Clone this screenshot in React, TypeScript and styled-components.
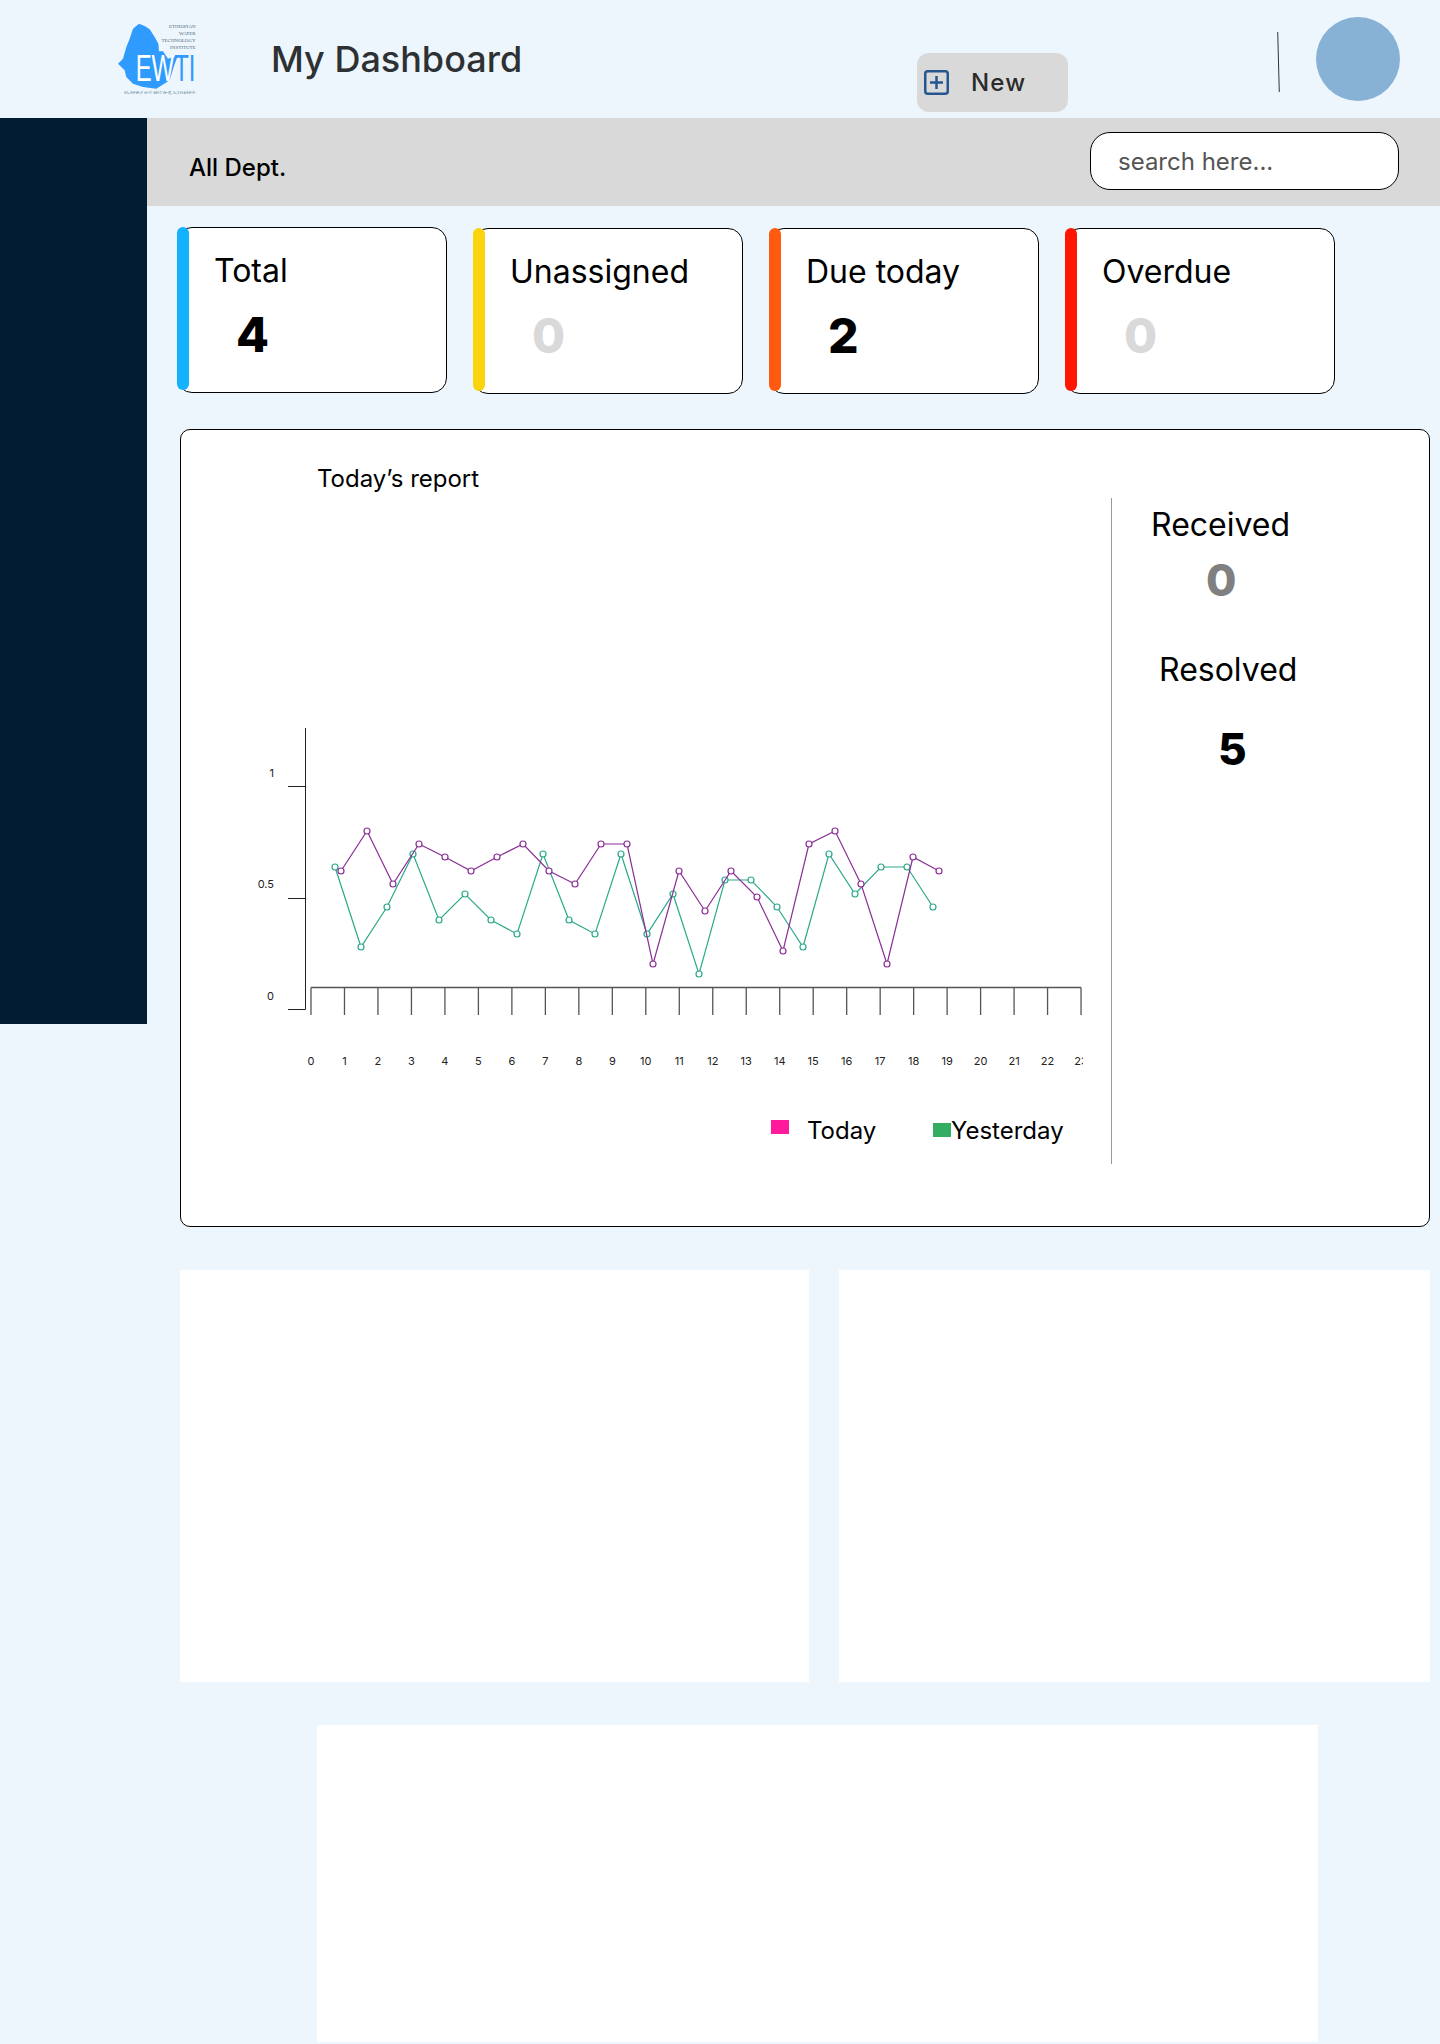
import styled, { createGlobalStyle } from 'styled-components';

const GlobalStyle = createGlobalStyle`
  * {
    box-sizing: border-box;
  }

  body {
    margin: 0;
    background: #edf5fd;
    font-family: Inter, "Noto Sans", sans-serif;
    color: #000;
  }
`;

const Page = styled.div`
  width: 1440px;
  min-height: 2044px;
  overflow: hidden;
`;

const Header = styled.header`
  height: 118px;
  display: flex;
  align-items: center;
  padding: 0 40px 0 118px;
`;

const Logo = styled.svg`
  width: 80px;
  height: 75px;
  flex: none;
`;

const PageTitle = styled.h1`
  margin: 0 0 0 73px;
  font-size: 36px;
  font-weight: 500;
  color: #2e3133;
`;

const NewButton = styled.button`
  width: 151px;
  height: 59px;
  margin: 47px 0 0 auto;
  padding: 0 0 0 7px;
  display: flex;
  align-items: center;
  gap: 22px;
  border: none;
  border-radius: 12px;
  background: #d9d9d9;
  color: #2b2b2b;
  font-family: inherit;
  font-size: 24px;
  font-weight: 500;
  letter-spacing: 1.2px;
`;

const HeaderRule = styled.div`
  width: 1px;
  height: 60px;
  margin: 6px 37px 0 210px;
  background: #333;
  transform: rotate(-1.5deg);
`;

const Avatar = styled.div`
  width: 84px;
  height: 84px;
  border-radius: 50%;
  background: #88b2d5;
`;

const Body = styled.div`
  display: flex;
  align-items: flex-start;
`;

const Sidebar = styled.aside`
  width: 147px;
  height: 906px;
  flex: none;
  background: #021d33;
`;

const Main = styled.main`
  flex: 1;
  min-width: 0;
  padding-bottom: 2px;
`;

const FilterBar = styled.div`
  height: 88px;
  display: flex;
  align-items: center;
  justify-content: space-between;
  padding: 0 41px 0 42px;
  background: #d9d9d9;
`;

const DeptLabel = styled.div`
  margin-top: 10px;
  font-size: 24px;
  font-weight: 500;
`;

const Search = styled.input`
  width: 309px;
  height: 58px;
  margin-bottom: 2px;
  padding: 0 27px;
  border: 1.5px solid #000;
  border-radius: 20px;
  background: #fff;
  font-family: inherit;
  font-size: 24px;
  outline: none;

  &::placeholder {
    color: #555;
    opacity: 1;
  }
`;

const CardRow = styled.section`
  display: flex;
  gap: 26px;
  align-items: flex-start;
  margin-top: 21px;
  padding-left: 30px;
`;

const Card = styled.div<{ $raised?: boolean }>`
  width: 270px;
  height: 166px;
  display: flex;
  margin-top: ${(p) => (p.$raised ? '0' : '1px')};
  border: 1px solid #000;
  border-radius: 15px;
  background: #fff;
`;

const Stripe = styled.div<{ $color: string }>`
  width: 12px;
  height: 163px;
  flex: none;
  margin: -1px 0 0 -1px;
  border-radius: 6px;
  background: ${(p) => p.$color};
`;

const CardBody = styled.div`
  padding: 23px 0 0 25px;
`;

const CardLabel = styled.div`
  font-size: 32px;
  line-height: 39px;
`;

const CardValue = styled.div<{ $muted?: boolean }>`
  margin: 16px 0 0 22px;
  font-size: 48px;
  line-height: 58px;
  font-weight: 800;
  color: ${(p) => (p.$muted ? '#d9d9d9' : '#000')};
`;

const ReportPanel = styled.section`
  width: 1250px;
  height: 798px;
  display: flex;
  margin: 35px 0 0 33px;
  border: 1px solid #000;
  border-radius: 10px;
  background: #fff;
`;

const ChartColumn = styled.div`
  width: 930px;
  flex: none;
`;

const ReportTitle = styled.h2`
  margin: 34px 0 0 136px;
  font-size: 24px;
  line-height: 29px;
  font-weight: 400;
`;

const Chart = styled.svg`
  display: block;
  width: 833px;
  height: 350px;
  margin: 227px 0 0 69px;
`;

const Legend = styled.div`
  display: flex;
  align-items: center;
  height: 30px;
  margin: 45px 0 0 590px;
`;

const LegendItem = styled.div<{ $gap: number; $width: number }>`
  width: ${(p) => p.$width}px;
  display: flex;
  align-items: center;
  gap: ${(p) => p.$gap}px;
  font-size: 24px;
`;

const Swatch = styled.span<{ $color: string; $lift?: boolean }>`
  width: 18px;
  height: 14px;
  flex: none;
  margin-bottom: ${(p) => (p.$lift ? '6px' : '0')};
  background: ${(p) => p.$color};
`;

const ReportRule = styled.div`
  width: 1px;
  height: 666px;
  flex: none;
  margin-top: 68px;
  background: #999;
`;

const Totals = styled.div`
  padding: 75px 0 0 39px;
`;

const TotalLabel = styled.div<{ $indent?: number }>`
  margin-left: ${(p) => p.$indent ?? 0}px;
  font-size: 32px;
  line-height: 39px;
`;

const TotalValue = styled.div<{ $indent: number; $grey?: boolean }>`
  margin-left: ${(p) => p.$indent}px;
  font-size: 44px;
  line-height: 54px;
  font-weight: 800;
  color: ${(p) => (p.$grey ? '#808080' : '#000')};
`;

const TotalBlock = styled.div<{ $top: number; $gap: number }>`
  margin-top: ${(p) => p.$top}px;

  ${TotalValue} {
    margin-top: ${(p) => p.$gap}px;
  }
`;

const PlaceholderRow = styled.div`
  display: flex;
  gap: 30px;
  margin: 43px 0 0 33px;
`;

const Placeholder = styled.div<{ $width: number }>`
  width: ${(p) => p.$width}px;
  height: 412px;
  background: #fff;
`;

const WidePlaceholder = styled.div`
  width: 1001px;
  height: 317px;
  margin: 43px 0 0 170px;
  background: #fff;
`;

const cards = [
  { label: 'Total', value: '4', color: '#12b2ff', raised: true },
  { label: 'Unassigned', value: '0', color: '#fbd40e', muted: true },
  { label: 'Due today', value: '2', color: '#ff5a10' },
  { label: 'Overdue', value: '0', color: '#ff1500', muted: true },
];

const todayPoints = [
  [341, 871], [367, 831], [393, 884], [419, 844], [445, 857], [471, 871], [497, 857], [523, 844],
  [549, 871], [575, 884], [601, 844], [627, 844], [653, 964], [679, 871], [705, 911], [731, 871],
  [757, 897], [783, 951], [809, 844], [835, 831], [861, 884], [887, 964], [913, 857], [939, 871],
];

const yesterdayPoints = [
  [335, 867], [361, 947], [387, 907], [413, 854], [439, 920], [465, 894], [491, 920], [517, 934],
  [543, 854], [569, 920], [595, 934], [621, 854], [647, 934], [673, 894], [699, 974], [725, 880],
  [751, 880], [777, 907], [803, 947], [829, 854], [855, 894], [881, 867], [907, 867], [933, 907],
];

const hours = Array.from({ length: 24 }, (_, i) => i);

function Series({ points, color }: { points: number[][]; color: string }) {
  return (
    <g fill="#fff" stroke={color} strokeWidth="1.2">
      <polyline fill="none" points={points.map((p) => p.join(',')).join(' ')} />
      {points.map(([x, y]) => (
        <circle key={x} cx={x} cy={y} r="3" />
      ))}
    </g>
  );
}

export default function App() {
  return (
    <Page>
      <GlobalStyle />
      <Header>
        <Logo viewBox="55 40 240 225">
          <path
            fill="#2f9bff"
            d="M118 45 L135 52 L150 62 L165 85 L176 105 L178 128 L190 128 L205 150 L235 140 L222 175 L210 215 L170 240 L130 235 L100 225 L80 205 L75 185 L55 165 L70 150 L80 115 L90 90 L100 60 Z"
          />
          <text transform="translate(108 218) scale(0.64 1)" fontFamily="Liberation Sans" fontSize="112">
            <tspan fill="#fff">EW</tspan>
            <tspan fill="#2f9bff">TI</tspan>
          </text>
          <g fill="#4f6b78" fontFamily="Liberation Serif" fontSize="15" textAnchor="end">
            <text x="288" y="58">ETHIOPIAN</text>
            <text x="288" y="78">WATER</text>
            <text x="288" y="100">TECHNOLOGY</text>
            <text x="288" y="122">INSTITUTE</text>
          </g>
          <text x="72" y="255" fill="#6b8896" fontFamily="Noto Sans, DejaVu Sans" fontSize="15" textLength="214">
            የኢትዮጵያ ውሃ ቴክኖሎጂ ኢንስቲትዩት
          </text>
        </Logo>
        <PageTitle>My Dashboard</PageTitle>
        <NewButton>
          <svg width="25" height="25" viewBox="0 0 25 25" fill="none" stroke="#25568f" strokeWidth="2.5">
            <rect x="1.25" y="1.25" width="22.5" height="22.5" rx="2.5" />
            <path d="M12.5 6v13M6 12.5h13" />
          </svg>
          New
        </NewButton>
        <HeaderRule />
        <Avatar />
      </Header>
      <Body>
        <Sidebar />
        <Main>
          <FilterBar>
            <DeptLabel>All Dept.</DeptLabel>
            <Search placeholder="search here..." />
          </FilterBar>
          <CardRow>
            {cards.map((card) => (
              <Card key={card.label} $raised={card.raised}>
                <Stripe $color={card.color} />
                <CardBody>
                  <CardLabel>{card.label}</CardLabel>
                  <CardValue $muted={card.muted}>{card.value}</CardValue>
                </CardBody>
              </Card>
            ))}
          </CardRow>
          <ReportPanel>
            <ChartColumn>
              <ReportTitle>Today’s report</ReportTitle>
              <Chart viewBox="250 720 833 350">
                <g stroke="#222" strokeWidth="1">
                  <path d="M305.5 728V1009.5H288M288 898.5H305.5M288 786.5H305.5" fill="none" />
                </g>
                <g fill="#222" fontFamily="Inter" fontSize="11" textAnchor="end">
                  <text x="274" y="777">1</text>
                  <text x="274" y="888">0.5</text>
                  <text x="274" y="1000">0</text>
                </g>
                <g stroke="#555" strokeWidth="1.3" fill="none">
                  <path d="M311 987.5H1081" />
                  {hours.map((h) => (
                    <path key={h} d={`M${311 + h * 33.48} 987.5V1015`} />
                  ))}
                </g>
                <g fill="#222" fontFamily="Inter" fontSize="11" textAnchor="middle">
                  {hours.map((h) => (
                    <text key={h} x={311 + h * 33.48} y="1065">
                      {h}
                    </text>
                  ))}
                </g>
                <Series points={yesterdayPoints} color="#2ba98a" />
                <Series points={todayPoints} color="#8b2f97" />
              </Chart>
              <Legend>
                <LegendItem $gap={18} $width={162}>
                  <Swatch $color="#ff1a9c" $lift />
                  Today
                </LegendItem>
                <LegendItem $gap={0} $width={130}>
                  <Swatch $color="#34ac62" />
                  Yesterday
                </LegendItem>
              </Legend>
            </ChartColumn>
            <ReportRule />
            <Totals>
              <TotalBlock $top={0} $gap={9}>
                <TotalLabel>Received</TotalLabel>
                <TotalValue $indent={55} $grey>0</TotalValue>
              </TotalBlock>
              <TotalBlock $top={43} $gap={33}>
                <TotalLabel $indent={8}>Resolved</TotalLabel>
                <TotalValue $indent={67}>5</TotalValue>
              </TotalBlock>
            </Totals>
          </ReportPanel>
          <PlaceholderRow>
            <Placeholder $width={629} />
            <Placeholder $width={591} />
          </PlaceholderRow>
          <WidePlaceholder />
        </Main>
      </Body>
    </Page>
  );
}
